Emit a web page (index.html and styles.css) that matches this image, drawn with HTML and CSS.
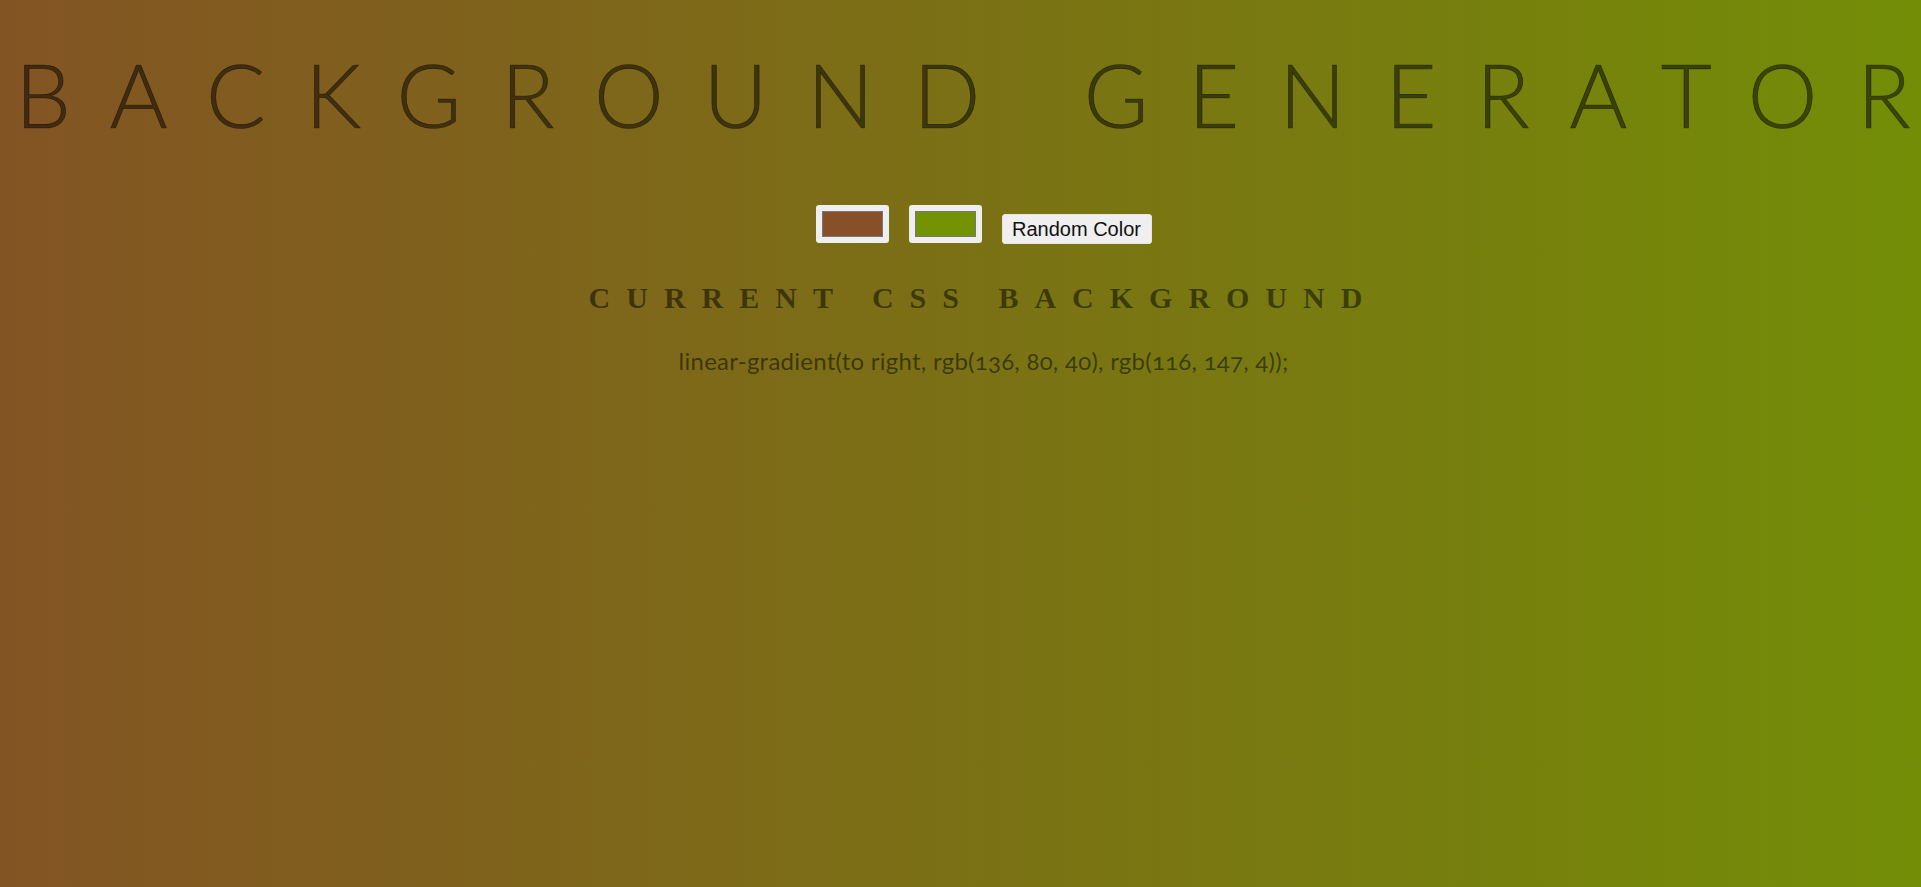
FILE: index.html
```html
<!DOCTYPE html>
<html lang="en">
<head>
<meta charset="utf-8">
<title>Background Generator</title>
<link rel="stylesheet" href="styles.css">
</head>
<body>
  <h1 class="title">BACKGROUND GENERATO<span class="title-last">R</span></h1>
  <div class="content">
    <div class="controls">
      <label class="swatch"><span class="swatch-color swatch-color--one"></span></label>
      <label class="swatch"><span class="swatch-color swatch-color--two"></span></label>
      <button class="random-btn" type="button">Random Color</button>
    </div>
    <h3 class="subtitle">CURRENT CSS BACKGROUND</h3>
    <p class="css-value">linear-gradient(to right, rgb(136, 80, 40), rgb(116, 147, 4));</p>
  </div>
</body>
</html>
```
FILE: styles.css
```css
html {
  height: 100%;
}

body {
  margin: 8px;
  min-height: calc(100% - 16px);
  background: linear-gradient(to right, rgb(131, 84, 35), rgb(115, 141, 7)) fixed;
  color: rgba(0, 0, 0, 0.5);
  text-align: center;
  font-family: Lato, "Open Sans", sans-serif;
}

.title {
  margin: 42px 0 0;
  padding-left: 5px;
  font-family: Lato, sans-serif;
  font-weight: 300;
  font-size: 88px;
  line-height: 1;
  letter-spacing: 39.8px;
  white-space: nowrap;
  -webkit-text-stroke: 0.7px rgba(0, 0, 0, 0.5);
}

.title-last {
  letter-spacing: 0;
}

.content {
  padding-left: 46px;
}

.controls {
  display: flex;
  justify-content: center;
  align-items: flex-end;
  gap: 20px;
  margin-top: 67px;
}

.swatch {
  display: block;
  box-sizing: border-box;
  width: 73px;
  height: 38px;
  padding: 6px;
  background: #efefef;
  border-radius: 3px;
}

.swatch-color {
  display: block;
  height: 100%;
  box-sizing: border-box;
  border: 1px solid #777;
}

.swatch-color--one {
  background: rgb(136, 80, 40);
}

.swatch-color--two {
  background: rgb(116, 147, 4);
}

.random-btn {
  box-sizing: border-box;
  height: 30px;
  width: 150px;
  margin-bottom: -1px;
  padding: 0 8px;
  font-family: "Liberation Sans", Arial, sans-serif;
  font-size: 20px;
  color: #111;
  background: #efefef;
  border: 1px solid #e6e6e6;
  border-radius: 3px;
}

.subtitle {
  margin: 40px 0 0;
  font-family: "Liberation Serif", "Times New Roman", serif;
  font-weight: 700;
  font-size: 30px;
  line-height: 1;
  letter-spacing: 16px;
}

.css-value {
  margin: 36px 0 0;
  font-family: Lato, sans-serif;
  font-size: 24px;
  line-height: 1;
  letter-spacing: 0.25px;
  font-variant-numeric: oldstyle-nums;
}
```
